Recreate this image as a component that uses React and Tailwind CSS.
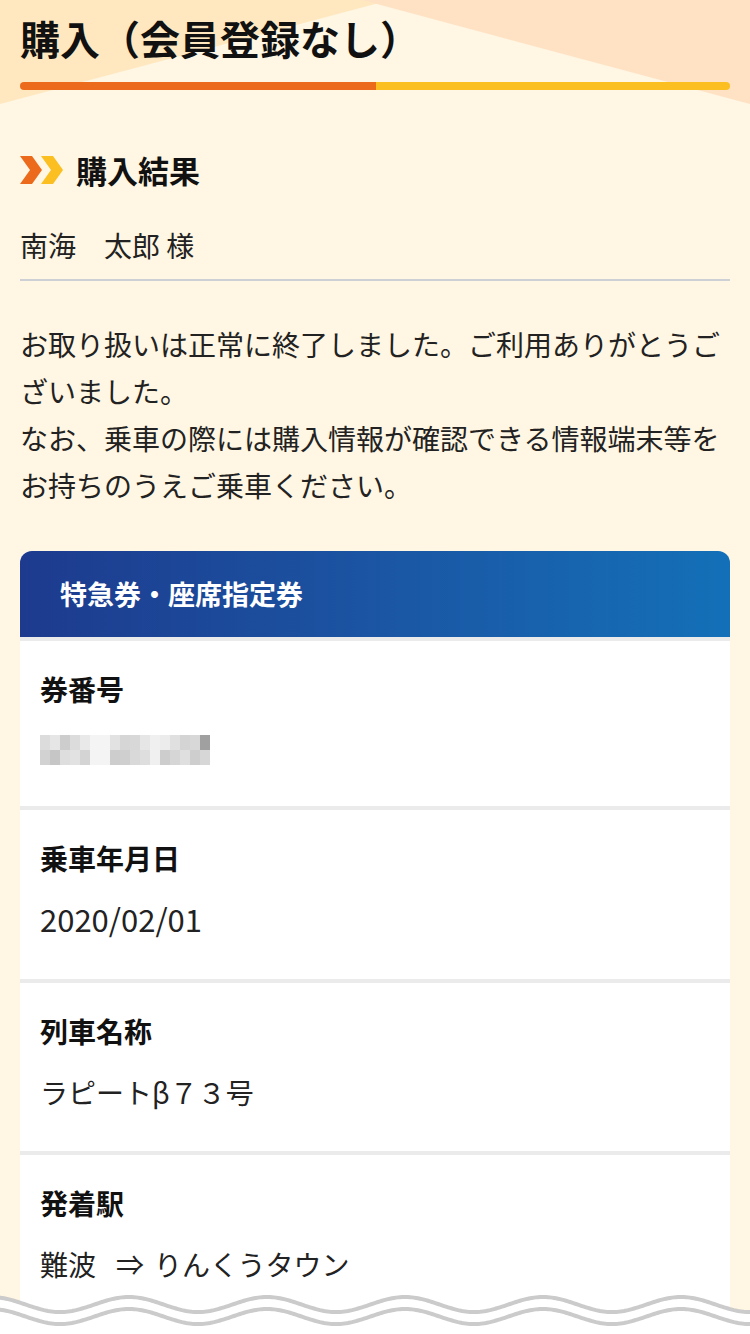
import React from "react";

function wavePath(offset, w, period, amp, center, close) {
  let d = "";
  for (let x = -2; x <= w + 2; x += 2) {
    const y = center + offset - amp * Math.cos((2 * Math.PI * (x - 129)) / period);
    d += (x === -2 ? "M" : "L") + x + " " + y.toFixed(2) + " ";
  }
  if (close) d += `L${w + 2} 60 L-2 60 Z`;
  return d;
}

function Chevrons() {
  return (
    <svg width="44" height="30" viewBox="0 0 44 30" className="shrink-0">
      <polygon points="0,1 12,1 22,15 12,29 0,29 10,15" fill="#ec6a1c" />
      <polygon points="21,1 33,1 43,15 33,29 21,29 31,15" fill="#fbbf22" />
    </svg>
  );
}

function Row({ label, children }) {
  return (
    <div className="bg-white pl-[20px] pr-[20px] pt-[30px] pb-[41px]">
      <div className="text-[28px] leading-[36px] font-bold text-[#111]">{label}</div>
      <div className="mt-[25px] text-[28px] leading-[36px] text-[#222]">{children}</div>
    </div>
  );
}

function Mosaic() {
  const groups = [
    ["#dcdcdc", "#e6e6e6", "#cdcdcd", "#dcdcdc", "#e9e9e9", "#d2d2d2", "#c6c6c6", "#dedede", "#e2e2e2", "#d4d4d4"],
    ["#e2e2e2", "#d6d6d6", "#d8d8d8", "#e6e6e6", "#cdcdcd", "#cfcfcf", "#d9d9d9", "#dedede"],
    ["#ececec", "#e0e0e0", "#d4d4d4", "#d8d8d8", "#a0a0a0", "#cdcdcd", "#d6d6d6", "#dfdfdf", "#cecece", "#d7d7d7"],
  ];
  return (
    <div className="flex h-[30px] items-stretch">
      <div className="grid grid-cols-5 grid-rows-2 w-[50px]">
        {groups[0].map((c, i) => (
          <div key={i} style={{ background: c }} />
        ))}
      </div>
      <div className="w-[20px] bg-[#f4f4f4]" />
      <div className="grid grid-cols-4 grid-rows-2 w-[40px]">
        {groups[1].map((c, i) => (
          <div key={i} style={{ background: c }} />
        ))}
      </div>
      <div className="w-[10px] bg-[#f0f0f0]" />
      <div className="grid grid-cols-5 grid-rows-2 w-[50px]">
        {groups[2].map((c, i) => (
          <div key={i} style={{ background: c }} />
        ))}
      </div>
    </div>
  );
}

export default function App() {
  const font = { fontFamily: '"Noto Sans CJK JP", "Noto Sans", sans-serif' };
  return (
    <div
      className="relative w-[750px] h-[1334px] overflow-hidden bg-[#fff6e3] text-[#222]"
      style={font}
    >
      <svg className="absolute left-0 top-0" width="750" height="110" viewBox="0 0 750 110">
        <polygon points="0,0 390,0 0,104" fill="#ffe8bf" />
        <polygon points="362,0 750,0 750,104" fill="#ffe2c4" />
      </svg>

      <div className="relative px-[20px]">
        <h1 className="pt-[12px] text-[40px] leading-[52px] font-bold text-[#111]">
          購入（会員登録なし）
        </h1>
        <div className="mt-[18px] flex h-[8px] rounded-full overflow-hidden">
          <div className="w-[356px] bg-[#ec6a1c]" />
          <div className="flex-1 bg-[#fbbf22]" />
        </div>

        <div className="mt-[60px] flex items-center gap-[12px] h-[40px]">
          <Chevrons />
          <h2 className="text-[31px] leading-[40px] font-bold text-[#111]">購入結果</h2>
        </div>

        <div className="mt-[35px] text-[28px] leading-[40px] pb-[14px] border-b-2 border-[#cdd0d4]">
          南海　太郎 様
        </div>

        <p className="mt-[40px] text-[28px] leading-[47px] text-[#222]">
          お取り扱いは正常に終了しました。ご利用ありがとうございました。
          <br />
          なお、乗車の際には購入情報が確認できる情報端末等をお持ちのうえご乗車ください。
        </p>

        <div className="mt-[42px] rounded-t-[12px] overflow-hidden bg-[#ebebeb] flex flex-col gap-[4px]">
          <div className="h-[86px] flex items-center pl-[40px] bg-gradient-to-r from-[#1d3a8e] to-[#1370b8]">
            <span className="text-[27px] font-bold text-white">特急券・座席指定券</span>
          </div>
          <Row label="券番号">
            <div className="pt-[3px]">
              <Mosaic />
            </div>
          </Row>
          <Row label="乗車年月日">
            <span className="text-[31px]">2020/02/01</span>
          </Row>
          <Row label="列車名称">ラピートβ７３号</Row>
          <Row label="発着駅">
            難波<span className="ml-[20px] mr-[10px]">⇒</span>りんくうタウン
          </Row>
        </div>
      </div>

      <svg className="absolute left-0 top-[1286px]" width="750" height="48" viewBox="0 0 750 48">
        <path d={wavePath(0, 750, 138, 7.5, 18.5, true)} fill="#ffffff" />
        <path d={wavePath(0, 750, 138, 7.5, 18.5, false)} fill="none" stroke="#cbcbcb" strokeWidth="4" />
        <path d={wavePath(12, 750, 138, 7.5, 18.5, false)} fill="none" stroke="#cbcbcb" strokeWidth="4" />
      </svg>
    </div>
  );
}
